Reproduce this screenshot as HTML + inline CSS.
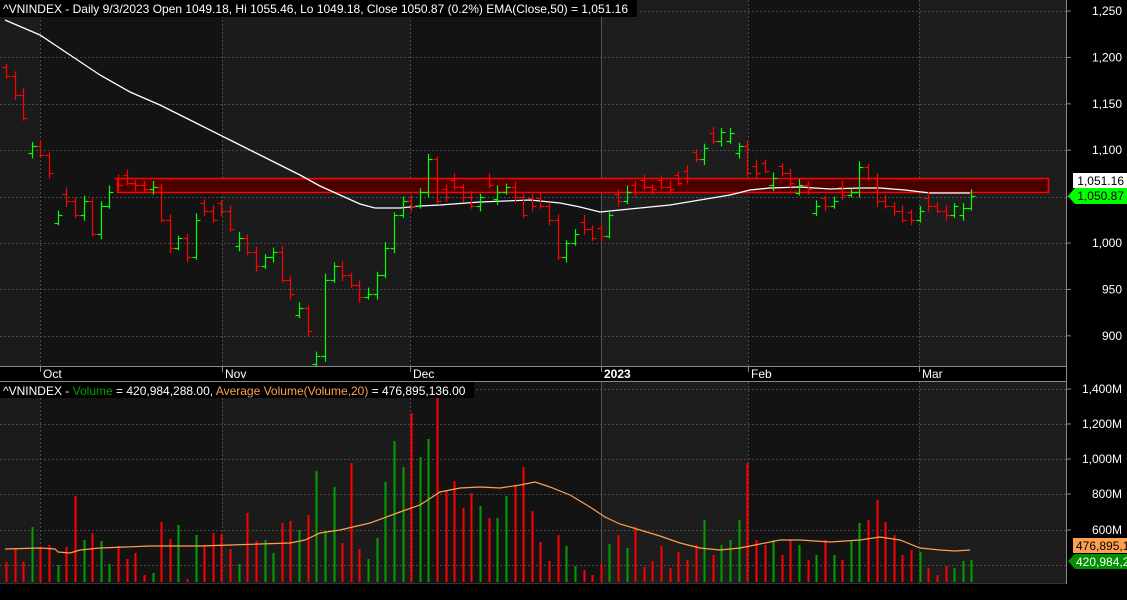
<!DOCTYPE html>
<html><head><meta charset="utf-8"><style>
html,body{margin:0;padding:0;background:#000;width:1127px;height:600px;overflow:hidden}
svg{display:block}
text{font-family:"Liberation Sans",sans-serif;font-size:12px}
</style></head><body>
<svg id="s" width="1127" height="600" xmlns="http://www.w3.org/2000/svg">
<rect width="1127" height="600" fill="#000"/>
<g id="bg"></g>
<g id="grid"></g>
<rect x="117.5" y="178.5" width="931" height="14" fill="#4a0000" stroke="#ff0000" stroke-width="1.5"/>
<g id="ema"></g>
<g id="bars"></g>
<g id="vol"></g>
<g id="axis"></g>
</svg>
<script>
const NS="http://www.w3.org/2000/svg";
function el(p,t,a,txt){const e=document.createElementNS(NS,t);for(const k in a)e.setAttribute(k,a[k]);if(txt!==undefined)e.textContent=txt;document.getElementById(p).appendChild(e);return e;}
const bands=[[0,40,'#1b1b1b'],[40,222,'#131313'],[222,410,'#1b1b1b'],[410,601,'#131313'],[601,748,'#1d1d1d'],[748,919,'#131313'],[919,1066,'#1d1d1d']];
for(const b of bands){el('bg','rect',{x:b[0],y:0,width:b[1]-b[0],height:366,fill:b[2]});el('bg','rect',{x:b[0],y:382,width:b[1]-b[0],height:201,fill:b[2]});}
const py=p=>11+(1250-p)*0.928;
for(let p=1250;p>=900;p-=50){const y=Math.round(py(p))+.5;el('grid','line',{x1:0,x2:1066,y1:y,y2:y,stroke:'#4a4a4a','stroke-dasharray':'2,2'});}
for(const y of [389,424,459,494,530,565]){el('grid','line',{x1:0,x2:1066,y1:y+.5,y2:y+.5,stroke:'#4a4a4a','stroke-dasharray':'2,2'});}
for(const x of [40,222,410,748,919]){el('grid','line',{x1:x+.5,x2:x+.5,y1:0,y2:366,stroke:'#4a4a4a','stroke-dasharray':'2,2'});el('grid','line',{x1:x+.5,x2:x+.5,y1:382,y2:583,stroke:'#4a4a4a','stroke-dasharray':'2,2'});}
el('grid','line',{x1:601.5,x2:601.5,y1:0,y2:583,stroke:'#555'});
const ep=[[5,20],[40,35],[70,55],[100,75],[130,92],[160,105],[200,125],[240,145],[270,160],[300,175],[320,186],[340,195],[360,204],[375,208],[400,208],[420,206],[440,205],[480,202],[530,200],[560,203],[580,207],[600,212],[620,210],[640,208],[670,205],[700,200],[730,195],[750,190],[770,188],[800,187],[830,189],[860,188],[880,188],[905,190],[930,193],[970,193]];
el('ema','polyline',{points:ep.map(p=>p.join(',')).join(' '),fill:'none',stroke:'#fff','stroke-width':1.3});
const kp=[[6,1180],[15,1160],[24,1135],[31,1105],[40,1095],[49,1075],[57,1030],[66,1045],[75,1030],[83,1045],[92,1010],[100,1040],[109,1055],[118,1062],[126,1065],[135,1062],[144,1058],[152,1060],[161,1025],[169,995],[178,1005],[187,985],[195,1025],[204,1035],[213,1025],[221,1035],[230,1015],[238,1005],[247,990],[256,975],[264,985],[273,990],[282,960],[290,945],[298,930],[307,905],[315,878],[325,960],[333,975],[342,965],[351,955],[359,942],[367,945],[376,965],[385,995],[393,1030],[402,1045],[411,1040],[419,1055],[428,1090],[437,1045],[445,1050],[454,1060],[463,1050],[471,1040],[480,1050],[489,1062],[497,1055],[506,1060],[514,1050],[523,1030],[531,1040],[540,1040],[548,1025],[557,985],[565,1000],[574,1010],[582,1015],[591,1005],[600,1008],[608,1030],[617,1045],[626,1055],[634,1055],[643,1060],[651,1058],[660,1060],[669,1058],[678,1065],[686,1070],[695,1090],[703,1102],[712,1110],[720,1120],[729,1118],[737,1105],[746,1075],[754,1075],[763,1078],[771,1070],[780,1075],[789,1065],[797,1062],[806,1058],[814,1040],[823,1040],[832,1045],[840,1052],[849,1055],[858,1082],[866,1070],[875,1045],[883,1040],[892,1035],[901,1025],[909,1025],[918,1035],[927,1040],[936,1035],[944,1030],[953,1040],[962,1038],[970,1051]];
const vt=[562,548,562,527,547,545,565,547,496,540,533,541,564,546,559,553,575,573,522,539,525,579,535,545,533,534,549,564,513,541,540,553,523,521,530,515,471,531,487,543,463,549,559,538,
482,441,467,413,457,439,398,490,481,508,493,506,518,518,496,485,467,511,542,561,535,546,566,570,575,564,544,535,548,527,567,561,546,568,552,
560,545,520,555,545,540,520,463,540,545,540,555,540,545,560,555,540,555,560,540,523,520,500,522,535,555,550,552,568,575,566,568,561,560];
const vc="rrrgrrgrrgrggrrrrgrrgrgrrrrgrrggrrgrgggrrrgg"+"gggrggrrrrrgrggrrrrrrggrrrgrgrrrrrr"+"rrgrgggrrrgrrgrgrgrggrrrrrrgrrrggg";
const N=vt.length;
for(let i=0;i<N;i++){
 const x=Math.round(6+8.62*i)+.5;
 const c=vc[i]==='g'?'#00ff00':'#ff0000';
 const cl=kp[Math.min(i,kp.length-1)][1];
 const prev=i>0?kp[Math.min(i-1,kp.length-1)][1]:cl+10;
 let op=prev;
 if(vc[i]==='g'&&op>=cl)op=cl-8; if(vc[i]==='r'&&op<=cl)op=cl+8;
 const hi=Math.max(op,cl)+3+(i*7%5), lo=Math.min(op,cl)-3-(i*3%6);
 el('bars','line',{x1:x,x2:x,y1:py(hi),y2:py(lo),stroke:c,'stroke-width':1.2});
 el('bars','line',{x1:x-4,x2:x,y1:Math.round(py(op))+.5,y2:Math.round(py(op))+.5,stroke:c,'stroke-width':1.2});
 el('bars','line',{x1:x,x2:x+4,y1:Math.round(py(cl))+.5,y2:Math.round(py(cl))+.5,stroke:c,'stroke-width':1.2});
 el('vol','rect',{x:x-1,y:vt[i],width:2,height:582-vt[i],fill:vc[i]==='g'?'#00a000':'#ff0000'});
}
const av=[[5,549],[40,548],[55,549],[58,552],[70,553],[80,550],[100,548],[150,546],[200,546],[230,545],[260,544],[290,543],[305,540],[320,533],[340,530],[370,523],[400,512],[420,505],[440,492],[460,488],[480,487],[500,488],[520,485],[535,482],[550,487],[570,495],[590,507],[605,517],[620,524],[640,530],[660,536],[680,543],[700,548],[720,550],[740,548],[760,544],[780,540],[800,540],[830,542],[860,540],[880,537],[900,540],[920,548],[940,550],[955,551],[970,550]];
el('vol','polyline',{points:av.map(p=>p.join(',')).join(' '),fill:'none',stroke:'#ffa050','stroke-width':1.2});
const A='axis';
el(A,'rect',{x:0,y:366,width:1066,height:16,fill:'#000'});
el(A,'line',{x1:0,x2:1066,y1:366.5,y2:366.5,stroke:'#888'});
el(A,'line',{x1:0,x2:1066,y1:381.5,y2:381.5,stroke:'#888'});
el(A,'line',{x1:1066.5,x2:1066.5,y1:0,y2:584,stroke:'#888'});
el(A,'line',{x1:0,x2:1066,y1:583.5,y2:583.5,stroke:'#333'});
for(const [x,t] of [[40,'Oct'],[222,'Nov'],[410,'Dec'],[601,'2023'],[748,'Feb'],[919,'Mar']]){el(A,'line',{x1:x+.5,x2:x+.5,y1:367,y2:372,stroke:'#888'});el(A,'text',{x:x+3,y:378,fill:'#fff','font-weight':t==='2023'?'bold':'normal'},t);}
for(let p=1250;p>=900;p-=50){const y=py(p);el(A,'line',{x1:1067,x2:1071,y1:y,y2:y,stroke:'#888'});el(A,'text',{x:1122,y:y+4,fill:'#fff','text-anchor':'end'},p.toLocaleString('en-US'));}
[[389,'1,400M'],[424,'1,200M'],[459,'1,000M'],[494,'800M'],[530,'600M']].forEach(([y,t])=>{el(A,'line',{x1:1067,x2:1071,y1:y,y2:y,stroke:'#888'});el(A,'text',{x:1122,y:y+4,fill:'#fff','text-anchor':'end'},t);});
el(A,'rect',{x:1073,y:173,width:54,height:15,fill:'#fff'});
el(A,'text',{x:1124,y:185,fill:'#000','text-anchor':'end'},'1,051.16');
el(A,'polygon',{points:'1068,196 1075,188 1127,188 1127,204 1075,204',fill:'#00ff00'});
el(A,'text',{x:1124,y:200,fill:'#000','text-anchor':'end'},'1,050.87');
el(A,'rect',{x:1073,y:538,width:54,height:15,fill:'#ffa050'});
el(A,'text',{x:1076,y:550,fill:'#000'},'476,895,1');
el(A,'polygon',{points:'1068,561 1075,554 1127,554 1127,569 1075,569',fill:'#009000'});
el(A,'text',{x:1076,y:566,fill:'#fff'},'420,984,2');
el(A,'rect',{x:0,y:0,width:637,height:17,fill:'#000'});
el(A,'text',{x:3,y:13,fill:'#fff'},'^VNINDEX - Daily 9/3/2023 Open 1049.18, Hi 1055.46, Lo 1049.18, Close 1050.87 (0.2%) EMA(Close,50) = 1,051.16');
el(A,'rect',{x:0,y:382,width:474,height:16,fill:'#000'});
const t=el(A,'text',{x:3,y:395,fill:'#fff'});
[['^VNINDEX - ','#fff'],['Volume','#00a000'],[' = 420,984,288.00, ','#fff'],['Average Volume(Volume,20)','#ffa050'],[' = 476,895,136.00','#fff']].forEach(([s,c])=>{const sp=document.createElementNS(NS,'tspan');sp.setAttribute('fill',c);sp.textContent=s;t.appendChild(sp);});
</script>
</body></html>
